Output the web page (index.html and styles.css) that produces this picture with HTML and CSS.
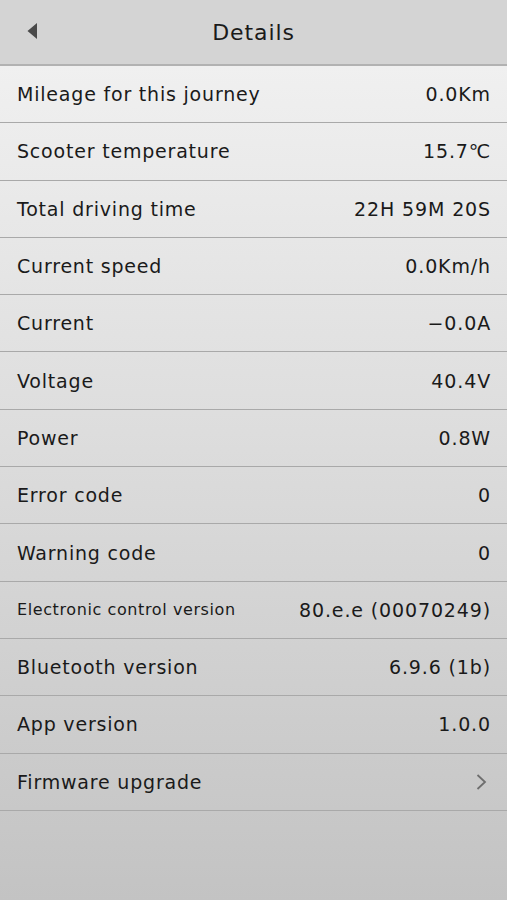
FILE: index.html
```html
<!DOCTYPE html>
<html lang="en">
<head>
<meta charset="utf-8">
<title>Details</title>
<link rel="stylesheet" href="styles.css">
</head>
<body>
<div class="screen">
  <header class="topbar">
    <svg class="back" width="12" height="18" viewBox="0 0 12 18"><path d="M11 1 L1.5 9 L11 17 Z" fill="#4a4a4a"/></svg>
    <h1 class="title">Details</h1>
  </header>
  <ul class="list">
    <li class="row"><span class="label">Mileage for this journey</span><span class="value">0.0Km</span></li>
    <li class="row"><span class="label">Scooter temperature</span><span class="value">15.7℃</span></li>
    <li class="row"><span class="label">Total driving time</span><span class="value">22H 59M 20S</span></li>
    <li class="row"><span class="label">Current speed</span><span class="value">0.0Km/h</span></li>
    <li class="row"><span class="label">Current</span><span class="value">−0.0A</span></li>
    <li class="row"><span class="label">Voltage</span><span class="value">40.4V</span></li>
    <li class="row"><span class="label">Power</span><span class="value">0.8W</span></li>
    <li class="row"><span class="label">Error code</span><span class="value">0</span></li>
    <li class="row"><span class="label">Warning code</span><span class="value">0</span></li>
    <li class="row"><span class="label small">Electronic control version</span><span class="value">80.e.e (00070249)</span></li>
    <li class="row"><span class="label">Bluetooth version</span><span class="value">6.9.6 (1b)</span></li>
    <li class="row"><span class="label">App version</span><span class="value">1.0.0</span></li>
    <li class="row"><span class="label">Firmware upgrade</span>
      <svg class="chev" width="12" height="18" viewBox="0 0 12 18"><path d="M2.5 2 L10 9 L2.5 16" fill="none" stroke="#6e6e6e" stroke-width="1.8"/></svg>
    </li>
  </ul>
</div>
</body>
</html>
```

FILE: styles.css
```css
* { box-sizing: border-box; }
html, body { margin: 0; padding: 0; }
body {
  width: 507px;
  height: 900px;
  overflow: hidden;
  font-family: "DejaVu Sans", "Noto Sans", sans-serif;
  color: #1a1a1a;
  background: linear-gradient(to bottom, #f0f0f0 0px, #f0f0f0 66px, #dcdcdc 450px, #c3c3c3 900px);
}
.screen { display: flex; flex-direction: column; }
.topbar {
  height: 66px;
  background: #d4d4d4;
  border-bottom: 2px solid #b2b2b2;
  display: flex;
  align-items: center;
  justify-content: center;
  position: relative;
}
.back { position: absolute; left: 26px; top: 22px; }
.title {
  margin: 0;
  font-size: 22px;
  font-weight: 400;
  letter-spacing: 0.9px;
}
.list { list-style: none; margin: 0; padding: 0; }
.row {
  height: 57.3px;
  border-bottom: 1px solid #a9a9a9;
  display: flex;
  align-items: center;
  justify-content: space-between;
  padding: 0 16px 0 17px;
  font-size: 19px;
}
.label { letter-spacing: 0.8px; }
.label.small { font-size: 16px; letter-spacing: 0.6px; }
.value { letter-spacing: 0.87px; }
.chev { margin-right: 4px; }
```
